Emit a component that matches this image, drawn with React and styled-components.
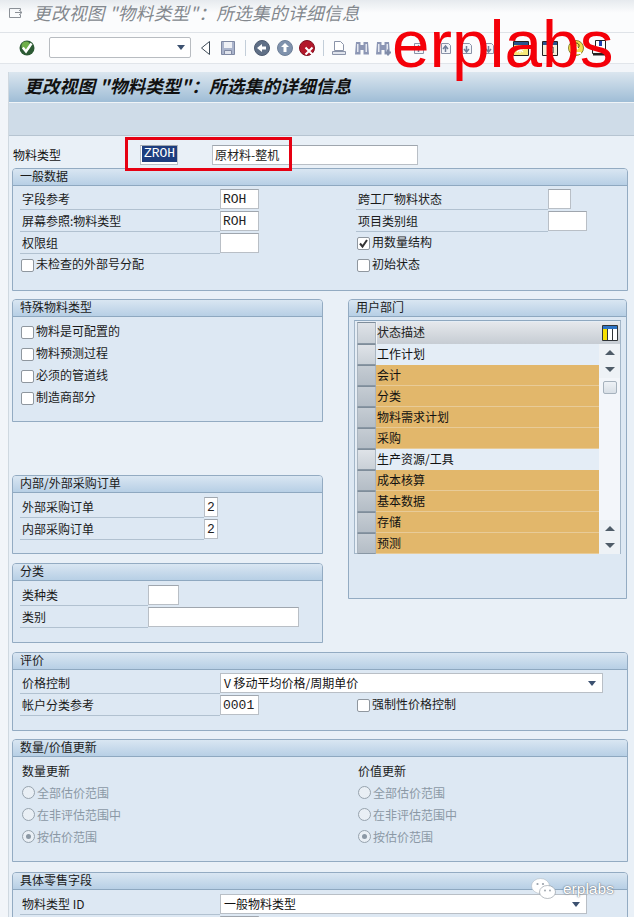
import React from 'react';
import styled, { createGlobalStyle } from 'styled-components';

const GlobalStyle = createGlobalStyle`
  html, body {
    margin: 0;
    padding: 0;
    background: #f2f5f9;
    font-family: "Noto Sans CJK SC", "Liberation Sans", sans-serif;
    font-size: 12px;
    color: #111;
  }
`;

const Page = styled.div`
  position: relative;
  width: 634px;
  height: 917px;
  overflow: hidden;
  background: #f2f5f9;
`;

// Title bar and toolbar
const TitleBar = styled.div`
  display: flex;
  align-items: center;
  gap: 9px;
  height: 33px;
  padding: 0 0 6px 8px;
  box-sizing: border-box;
  background: linear-gradient(#e6eaee, #fbfcfd 40%);
  border-bottom: 1px solid #dfe3e8;
`;

const TitleText = styled.div`
  font-size: 17.6px;
  line-height: 20px;
  letter-spacing: 0.35px;
  font-style: italic;
  color: #83888e;
  white-space: nowrap;
`;

const Toolbar = styled.div`
  display: flex;
  align-items: center;
  height: 31px;
  padding-bottom: 1px;
  box-sizing: border-box;
  background: #fbfcfd;
  border-bottom: 1px solid #e1e5ea;
`;

const Tool = styled.div`
  display: flex;
  flex: none;
  align-items: center;
  justify-content: center;
  width: 16px;
  height: 16px;
  margin-left: ${(p) => p.$ml}px;
`;

const Separator = styled.div`
  flex: none;
  width: 1px;
  height: 16px;
  background: #c3ced9;
  margin-left: ${(p) => p.$ml}px;
`;

const CommandField = styled.div`
  display: flex;
  flex: none;
  align-items: center;
  justify-content: flex-end;
  box-sizing: border-box;
  width: 142px;
  height: 21px;
  margin-left: 14px;
  padding-right: 5px;
  background: #fff;
  border: 1px solid #b8bcc1;
  border-radius: 2px;
`;

const Arrow = styled.div`
  width: 0;
  height: 0;
  border-left: 4px solid transparent;
  border-right: 4px solid transparent;
  border-top: 5px solid ${(p) => p.$color || '#3c5170'};
`;

const ArrowUp = styled.div`
  width: 0;
  height: 0;
  border-left: 5px solid transparent;
  border-right: 5px solid transparent;
  border-bottom: 5px solid #4f5c68;
`;

const ArrowDown = styled(ArrowUp)`
  border-bottom: 0;
  border-top: 5px solid #4f5c68;
`;

// Main panel
const Main = styled.div`
  margin: 8px 0 0 8px;
  background: #e9f0f7;
  border-left: 1px solid #cfd8e0;
`;

const HeaderBand = styled.div`
  display: flex;
  align-items: center;
  height: 31px;
  padding: 0 0 3px 15px;
  background: linear-gradient(#dbe6ef, #9fbdd6);
  border-bottom: 1px solid #f0f4f7;
  box-sizing: border-box;
`;

const HeaderTitle = styled.div`
  font-size: 17.6px;
  line-height: 20px;
  letter-spacing: 0.2px;
  font-weight: 700;
  font-style: italic;
  color: #111;
  white-space: nowrap;
`;

const SubBand = styled.div`
  height: 33px;
  background: #cfdce8;
  border-bottom: 1px solid #b6c4d1;
  box-sizing: border-box;
`;

const TypeRow = styled.div`
  display: flex;
  align-items: center;
  height: 32px;
  padding: 6px 0 0 4px;
  box-sizing: border-box;
`;

const TypeLabel = styled.div`
  width: 127px;
  line-height: 16px;
`;

const Content = styled.div`
  display: flex;
  flex-direction: column;
  padding: 0 6px 0 3px;
`;

const Group = styled.section`
  flex: none;
  box-sizing: border-box;
  height: ${(p) => p.$h}px;
  margin-top: ${(p) => p.$mt || 0}px;
  background: #dde8f3;
  border: 1px solid #93abc2;
  border-radius: 4px 4px 0 0;
`;

const GroupTitle = styled.div`
  box-sizing: border-box;
  height: 17px;
  padding-left: 7px;
  line-height: 14px;
  background: linear-gradient(#d9e6f2, #b7cfe5);
  border-bottom: 1px solid #8ea8c0;
  border-radius: 3px 3px 0 0;
  color: #1a1a1a;
`;

const GroupBody = styled.div`
  padding: ${(p) => p.$pt}px 0 0 7px;
`;

const Columns = styled.div`
  display: grid;
  grid-template-columns: 336px 1fr;
`;

const SideBySide = styled.div`
  display: grid;
  grid-template-columns: 311px 279px;
  column-gap: 25px;
  margin-top: 8px;
`;

const Stack = styled.div`
  display: flex;
  flex-direction: column;
`;

const Row = styled.div`
  display: flex;
  height: 22px;
`;

const Label = styled.div`
  box-sizing: border-box;
  flex: none;
  width: ${(p) => p.$w}px;
  height: 22px;
  padding-left: 2px;
  line-height: 22px;
  border-bottom: 1px solid #b1c1d0;
  color: #1a1a1a;
  white-space: nowrap;
`;

const Input = styled.div`
  box-sizing: border-box;
  flex: none;
  width: ${(p) => p.$w}px;
  height: ${(p) => p.$h || 20}px;
  margin-top: 1px;
  padding-left: 2px;
  background: #fff;
  border: 1px solid #b9bfc6;
  border-top-color: #9fa6ae;
  font-family: "Liberation Mono", monospace;
  font-size: 13px;
  line-height: 20px;
  color: #222;
`;

const TypeInput = styled(Input)`
  margin-top: 0;
  margin-left: ${(p) => p.$ml || 0}px;
  padding-left: ${(p) => p.$pl || 2}px;
  font-family: "Noto Sans CJK SC", sans-serif;
  font-size: 12px;
  line-height: 18px;
`;

const Highlight = styled.span`
  display: block;
  height: 16px;
  background: #1d3d7e;
  color: #fff;
  font-family: "Liberation Mono", monospace;
  font-size: 13px;
  line-height: 16px;
  text-align: center;
`;

const Select = styled.div`
  display: flex;
  flex: none;
  align-items: center;
  justify-content: space-between;
  box-sizing: border-box;
  width: ${(p) => p.$w}px;
  height: 20px;
  margin-top: 1px;
  padding: 0 6px 0 3px;
  background: #fff;
  border: 1px solid #b9bfc6;
  line-height: 18px;
  white-space: nowrap;
`;

const CheckRow = styled.div`
  display: flex;
  align-items: center;
  gap: 2px;
  height: 22px;
  padding-left: ${(p) => p.$pl ?? 1}px;
  margin-left: ${(p) => p.$ml || 0}px;
  white-space: nowrap;
  color: #1a1a1a;
`;

const CheckText = styled.span`
  margin-bottom: 3px;
  line-height: 16px;
`;

const Box = styled.span`
  display: flex;
  align-items: center;
  justify-content: center;
  box-sizing: border-box;
  width: 13px;
  height: 13px;
  background: #fff;
  border: 1px solid #8f979f;
  border-radius: 2px;
`;

const RadioRow = styled.div`
  display: flex;
  align-items: center;
  gap: 2px;
  height: 22px;
  padding-left: 2px;
  color: #8b98a5;
  white-space: nowrap;
`;

const Radio = styled.span`
  display: flex;
  align-items: center;
  justify-content: center;
  box-sizing: border-box;
  width: 13px;
  height: 13px;
  border: 1px solid #97a3ae;
  border-radius: 50%;
  background: #e9eff5;
`;

const RadioDot = styled.span`
  width: 5px;
  height: 5px;
  border-radius: 50%;
  background: #8b98a5;
`;

const ColumnHeading = styled.div`
  height: 21px;
  padding-left: 2px;
  line-height: 22px;
  color: #1a1a1a;
`;

// Table control
const TablePanel = styled.div`
  box-sizing: border-box;
  width: 267px;
  height: 234px;
  margin: 3px 0 0 5px;
  padding: 1px 0 0 2px;
  background: #e5edf5;
  border: 1px solid #a3b6c8;
  border-top: 1px solid #8ea8c0;
`;

const TableHead = styled.div`
  display: flex;
  height: 22px;
`;

const Selector = styled.div`
  flex: none;
  box-sizing: border-box;
  width: 19px;
  height: ${(p) => p.$h || 21}px;
  background: ${(p) =>
    p.$dark ? 'linear-gradient(#c5ccd3, #b4bdc6)' : 'linear-gradient(#dfe3e8, #c9d0d7)'};
  border: 1px solid #aab5c0;
  border-top-color: #7f8d9a;
  border-bottom-color: #8997a4;
`;

const HeadCell = styled.div`
  flex: 1;
  line-height: 20px;
  background: linear-gradient(#e5e8ec, #c6ccd3);
  border-left: 1px solid #f2f4f6;
  color: #222;
`;

const ConfigCell = styled.div`
  display: flex;
  align-items: center;
  justify-content: center;
  flex: none;
  width: 21px;
  background: linear-gradient(#e5e8ec, #c6ccd3);
`;

const TableBody = styled.div`
  display: flex;
`;

const RowsColumn = styled.div`
  flex: 1;
`;

const TableRow = styled.div`
  display: flex;
  height: 21px;
`;

const Cell = styled.div`
  flex: 1;
  box-sizing: border-box;
  padding-left: 1px;
  line-height: 20px;
  color: #111;
  background: ${(p) => (p.$on ? '#e2b76b' : '#e4edf6')};
  border-bottom: 1px solid ${(p) => (p.$on ? '#e8cb98' : '#e4edf6')};
`;

const ScrollColumn = styled.div`
  display: flex;
  flex: none;
  flex-direction: column;
  width: 21px;
  background: #f3f6fa;
`;

const ScrollButton = styled.div`
  display: flex;
  align-items: center;
  justify-content: center;
  height: 17px;
  background: #eef2f6;
`;

const ScrollThumb = styled.div`
  box-sizing: border-box;
  width: 14px;
  height: 13px;
  margin: 3px 0 0 4px;
  background: linear-gradient(#eef2f6, #d8dfe6);
  border: 1px solid #a6b2bd;
  border-radius: 2px;
`;

const ScrollTrack = styled.div`
  flex: 1;
`;

// Overlays on top of the screenshot
const RedFrame = styled.div`
  position: absolute;
  left: 125px;
  top: 137px;
  width: 167px;
  height: 34px;
  box-sizing: border-box;
  border: 3px solid #e60012;
`;

const Watermark = styled.div`
  position: absolute;
  left: 392px;
  top: 5px;
  font-family: "Liberation Sans", Arial, sans-serif;
  font-size: 67.5px;
  line-height: 77px;
  color: #f40009;
`;

const WeChatMark = styled.div`
  position: absolute;
  left: 531px;
  top: 878px;
  display: flex;
  align-items: center;
  gap: 7px;
  font-family: "Liberation Sans", Arial, sans-serif;
  font-size: 15.5px;
  color: #fff;
  text-shadow: 0 0 2px #6d7680, 0 0 1px #6d7680;
`;

const PageIcon = () => (
  <svg width="16" height="16" viewBox="0 0 16 16">
    <path d="M1.5 3.5h11v2M1.5 3.5v9h11v-3" fill="none" stroke="#8b9097" />
    <path d="M7 7.5h7M11 5l3 2.5-3 2.5" fill="none" stroke="#8b9097" />
  </svg>
);

const CheckIcon = () => (
  <svg width="16" height="16" viewBox="0 0 16 16">
    <circle cx="8" cy="8" r="7.5" fill="#2c5a34" />
    <circle cx="7" cy="6" r="4.5" fill="#6fb04a" />
    <path d="M3.8 7.5l3.2 4 5.5-8" fill="none" stroke="#fff" strokeWidth="2.4" />
  </svg>
);

const BackIcon = () => (
  <svg width="16" height="16" viewBox="0 0 16 16">
    <path d="M11.5 1.5v13L3.5 8z" fill="#fff" stroke="#3d4a57" />
  </svg>
);

const SaveIcon = () => (
  <svg width="16" height="16" viewBox="0 0 16 16">
    <path d="M1.5 1.5h13v13h-13z" fill="#aab4cc" stroke="#7f89a3" />
    <path d="M4 2h8v6H4z" fill="#eef0f5" />
    <path d="M4.5 10.5h7v4h-7z" fill="#dfe3ec" stroke="#7f89a3" />
  </svg>
);

const RoundIcon = ({ color, ring, children }) => (
  <svg width="16" height="16" viewBox="0 0 16 16">
    <circle cx="8" cy="8" r="7.5" fill={color} stroke={ring} />
    {children}
  </svg>
);

const PrintIcon = () => (
  <svg width="16" height="16" viewBox="0 0 16 16">
    <path d="M3.5 1.5h6l3 3v6h-9z" fill="#fff" stroke="#8a93a8" />
    <path d="M1.5 11.5h13v3h-13z" fill="#dfe3ec" stroke="#8a93a8" />
  </svg>
);

// Binoculars: two barrels joined by a bridge
const FindIcon = ({ plus }) => (
  <svg width="16" height="16" viewBox="0 0 16 16">
    <path d="M2 2h4.500v12.500H1zM9.500 2H14l1 12.500H9.500zM6.500 5h3v5h-3z" fill="#8d97b5" />
    <path d="M3 4h1.500v8H3zM11.500 4H13v8h-1.500z" fill="#e6e9f1" />
    {plus && <path d="M10 12.500h6M13 9.500v6" stroke="#7f8ba8" strokeWidth="2" />}
  </svg>
);

const PageMoveIcon = ({ d }) => (
  <svg width="16" height="16" viewBox="0 0 16 16">
    <path d="M4.5 3.5h7l2 2v8h-9z" fill="#f3f5f9" stroke="#8a93a8" />
    <path d={d} fill="none" stroke="#6f7e99" strokeWidth="1.5" />
  </svg>
);

const WindowIcon = ({ star }) => (
  <svg width="16" height="16" viewBox="0 0 16 16">
    <path d="M.5 1.5h15v14H.5z" fill={star ? '#f7e97a' : '#f2efd9'} stroke="#222" />
    <path d="M1 2h14v3H1z" fill="#27558f" />
    {star ? (
      <path d="M7 5v8M3 9h8M4 6l6 6M10 6l-6 6" stroke="#fff" strokeWidth="1.2" />
    ) : (
      <path d="M6 7h5v6H6z" fill="#fff" stroke="#222" />
    )}
  </svg>
);

const HelpIcon = () => (
  <svg width="16" height="18" viewBox="0 0 16 18">
    <circle cx="8" cy="9" r="7.5" fill="#f3e04f" stroke="#8b8330" />
    <path d="M5 5l5 5M6 14h7" stroke="#fff" strokeWidth="2" />
    <path d="M8 4c3 0 4 3 2 5" fill="none" stroke="#3e3a14" />
  </svg>
);

const LayoutIcon = () => (
  <svg width="16" height="18" viewBox="0 0 16 18">
    <path d="M.5 9.500h12v5H.5z" fill="#f2f2f2" stroke="#222" />
    <path d="M3.500 1.500h10v10h-10z" fill="#fff" stroke="#222" />
    <path d="M7 2h3v5H7z" fill="#1f3fb0" />
    <path d="M1 15h14v1.500H1z" fill="#222" />
  </svg>
);

const ColumnsIcon = () => (
  <svg width="16" height="16" viewBox="0 0 16 16">
    <path d="M.5 .5h15v15H.5z" fill="#f6df00" stroke="#30343a" />
    <path d="M1 1h14v3H1z" fill="#2c73c4" />
    <path d="M5.500 4v11M10.500 4v11" stroke="#30343a" />
    <path d="M6 4h4v11H6zM11 4h4v11h-4z" fill="#fff" />
  </svg>
);

const WeChatIcon = () => (
  <svg width="25" height="22" viewBox="0 0 25 22">
    <ellipse cx="9.5" cy="8" rx="9" ry="7.5" fill="#fff" stroke="#aab2ba" strokeWidth="0.5" />
    <ellipse cx="16.5" cy="14" rx="8" ry="6.5" fill="#fff" stroke="#8c949c" strokeWidth="0.6" />
    <circle cx="6.5" cy="6" r="1.1" fill="#9aa2aa" />
    <circle cx="12" cy="6" r="1.1" fill="#9aa2aa" />
    <circle cx="14" cy="12.5" r="0.9" fill="#9aa2aa" />
    <circle cx="19" cy="12.5" r="0.9" fill="#9aa2aa" />
  </svg>
);

const statuses = [
  ['工作计划', false],
  ['会计', true],
  ['分类', true],
  ['物料需求计划', true],
  ['采购', true],
  ['生产资源/工具', false],
  ['成本核算', true],
  ['基本数据', true],
  ['存储', true],
  ['预测', true],
];

const Check = ({ checked, label, ...rest }) => (
  <CheckRow {...rest}>
    <Box>
      {checked && (
        <svg width="11" height="11" viewBox="0 0 11 11">
          <path d="M2 5.500l2.500 3L9 2" fill="none" stroke="#333" strokeWidth="2" />
        </svg>
      )}
    </Box>
    <CheckText>{label}</CheckText>
  </CheckRow>
);

const RadioOption = ({ selected, label }) => (
  <RadioRow>
    <Radio>{selected && <RadioDot />}</Radio>
    {label}
  </RadioRow>
);

const UpdateColumn = ({ title }) => (
  <div>
    <ColumnHeading>{title}</ColumnHeading>
    <RadioOption label="全部估价范围" />
    <RadioOption label="在非评估范围中" />
    <RadioOption label="按估价范围" selected />
  </div>
);

export default function App() {
  return (
    <Page>
      <GlobalStyle />
      <TitleBar>
        <PageIcon />
        <TitleText>更改视图 "物料类型"：所选集的详细信息</TitleText>
      </TitleBar>
      <Toolbar>
        <Tool $ml={19}><CheckIcon /></Tool>
        <CommandField><Arrow /></CommandField>
        <Tool $ml={7}><BackIcon /></Tool>
        <Tool $ml={6}><SaveIcon /></Tool>
        <Separator $ml={9} />
        <Tool $ml={8}>
          <RoundIcon color="#5f6f86" ring="#4d5b70">
            <path d="M3 8l5-4v2.500h4v3H8V12z" fill="#fff" />
          </RoundIcon>
        </Tool>
        <Tool $ml={7}>
          <RoundIcon color="#7f92ad" ring="#6f8099">
            <path d="M8 3l4 4H9.500v5h-3V7H4z" fill="#fff" />
          </RoundIcon>
        </Tool>
        <Tool $ml={6}>
          <RoundIcon color="#b3172a" ring="#7d1020">
            <path d="M6.500 7.500l7 7M13.500 7.500l-7 7" stroke="#fff" strokeWidth="2" />
          </RoundIcon>
        </Tool>
        <Separator $ml={8} />
        <Tool $ml={7}><PrintIcon /></Tool>
        <Tool $ml={7}><FindIcon /></Tool>
        <Tool $ml={5}><FindIcon plus /></Tool>
        <Tool $ml={19}><PageMoveIcon d="M8.500 6v6M6 9l2.500-3L11 9" /></Tool>
        <Tool $ml={11}><PageMoveIcon d="M8.500 6v6M6 9l2.500-3L11 9" /></Tool>
        <Tool $ml={5}><PageMoveIcon d="M8.500 6v6M6 9l2.500 3L11 9" /></Tool>
        <Tool $ml={6}><PageMoveIcon d="M8.500 6v6M6 9l2.500 3L11 9" /></Tool>
        <Tool $ml={17}><WindowIcon star /></Tool>
        <Tool $ml={13}><WindowIcon /></Tool>
        <Tool $ml={10}><HelpIcon /></Tool>
        <Tool $ml={8}><LayoutIcon /></Tool>
      </Toolbar>

      <Main>
        <HeaderBand>
          <HeaderTitle>更改视图 "物料类型"：所选集的详细信息</HeaderTitle>
        </HeaderBand>
        <SubBand />
        <TypeRow>
          <TypeLabel>物料类型</TypeLabel>
          <TypeInput $w={38} $pl={1}><Highlight>ZROH</Highlight></TypeInput>
          <TypeInput $w={206} $ml={34}>原材料-整机</TypeInput>
        </TypeRow>

        <Content>
          <Group $h={123}>
            <GroupTitle>一般数据</GroupTitle>
            <GroupBody $pt={2}>
              <Columns>
                <div>
                  <Row><Label $w={200}>字段参考</Label><Input $w={39}>ROH</Input></Row>
                  <Row><Label $w={200}>屏幕参照:物料类型</Label><Input $w={39}>ROH</Input></Row>
                  <Row><Label $w={200}>权限组</Label><Input $w={39} /></Row>
                  <Check label="未检查的外部号分配" />
                </div>
                <div>
                  <Row><Label $w={192}>跨工厂物料状态</Label><Input $w={23} /></Row>
                  <Row><Label $w={192}>项目类别组</Label><Input $w={39} /></Row>
                  <Check checked label="用数量结构" />
                  <Check label="初始状态" />
                </div>
              </Columns>
            </GroupBody>
          </Group>

          <SideBySide>
            <Stack>
              <Group $h={123}>
                <GroupTitle>特殊物料类型</GroupTitle>
                <GroupBody $pt={4}>
                  <Check label="物料是可配置的" />
                  <Check label="物料预测过程" />
                  <Check label="必须的管道线" />
                  <Check label="制造商部分" />
                </GroupBody>
              </Group>
              <Group $h={79} $mt={53}>
                <GroupTitle>内部/外部采购订单</GroupTitle>
                <GroupBody $pt={3}>
                  <Row><Label $w={184}>外部采购订单</Label><Input $w={14}>2</Input></Row>
                  <Row><Label $w={184}>内部采购订单</Label><Input $w={14}>2</Input></Row>
                </GroupBody>
              </Group>
              <Group $h={80} $mt={9}>
                <GroupTitle>分类</GroupTitle>
                <GroupBody $pt={3}>
                  <Row><Label $w={128}>类种类</Label><Input $w={31} /></Row>
                  <Row><Label $w={128}>类别</Label><Input $w={151} /></Row>
                </GroupBody>
              </Group>
            </Stack>

            <Group $h={300}>
              <GroupTitle>用户部门</GroupTitle>
              <TablePanel>
                <TableHead>
                  <Selector $h={22} />
                  <HeadCell>状态描述</HeadCell>
                  <ConfigCell><ColumnsIcon /></ConfigCell>
                </TableHead>
                <TableBody>
                  <RowsColumn>
                    {statuses.map(([name, on]) => (
                      <TableRow key={name}>
                        <Selector $dark={on} />
                        <Cell $on={on}>{name}</Cell>
                      </TableRow>
                    ))}
                  </RowsColumn>
                  <ScrollColumn>
                    <ScrollButton><ArrowUp /></ScrollButton>
                    <ScrollButton><ArrowDown /></ScrollButton>
                    <ScrollThumb />
                    <ScrollTrack />
                    <ScrollButton><ArrowUp /></ScrollButton>
                    <ScrollButton><ArrowDown /></ScrollButton>
                  </ScrollColumn>
                </TableBody>
              </TablePanel>
            </Group>
          </SideBySide>

          <Group $h={79} $mt={9}>
            <GroupTitle>评价</GroupTitle>
            <GroupBody $pt={2}>
              <Row>
                <Label $w={200}>价格控制</Label>
                <Select $w={383}>V 移动平均价格/周期单价<Arrow /></Select>
              </Row>
              <Row>
                <Label $w={200}>帐户分类参考</Label>
                <Input $w={39}>0001</Input>
                <Check $ml={97} label="强制性价格控制" />
              </Row>
            </GroupBody>
          </Group>

          <Group $h={123} $mt={8}>
            <GroupTitle>数量/价值更新</GroupTitle>
            <GroupBody $pt={3}>
              <Columns>
                <UpdateColumn title="数量更新" />
                <UpdateColumn title="价值更新" />
              </Columns>
            </GroupBody>
          </Group>

          <Group $h={60} $mt={10}>
            <GroupTitle>具体零售字段</GroupTitle>
            <GroupBody $pt={3}>
              <Row>
                <Label $w={200}>物料类型 ID</Label>
                <Select $w={367}>一般物料类型<Arrow /></Select>
              </Row>
              <Row>
                <Label $w={200} />
                <Input $w={39} />
              </Row>
            </GroupBody>
          </Group>
        </Content>
      </Main>

      <RedFrame />
      <Watermark>erplabs</Watermark>
      <WeChatMark><WeChatIcon />erplabs</WeChatMark>
    </Page>
  );
}
